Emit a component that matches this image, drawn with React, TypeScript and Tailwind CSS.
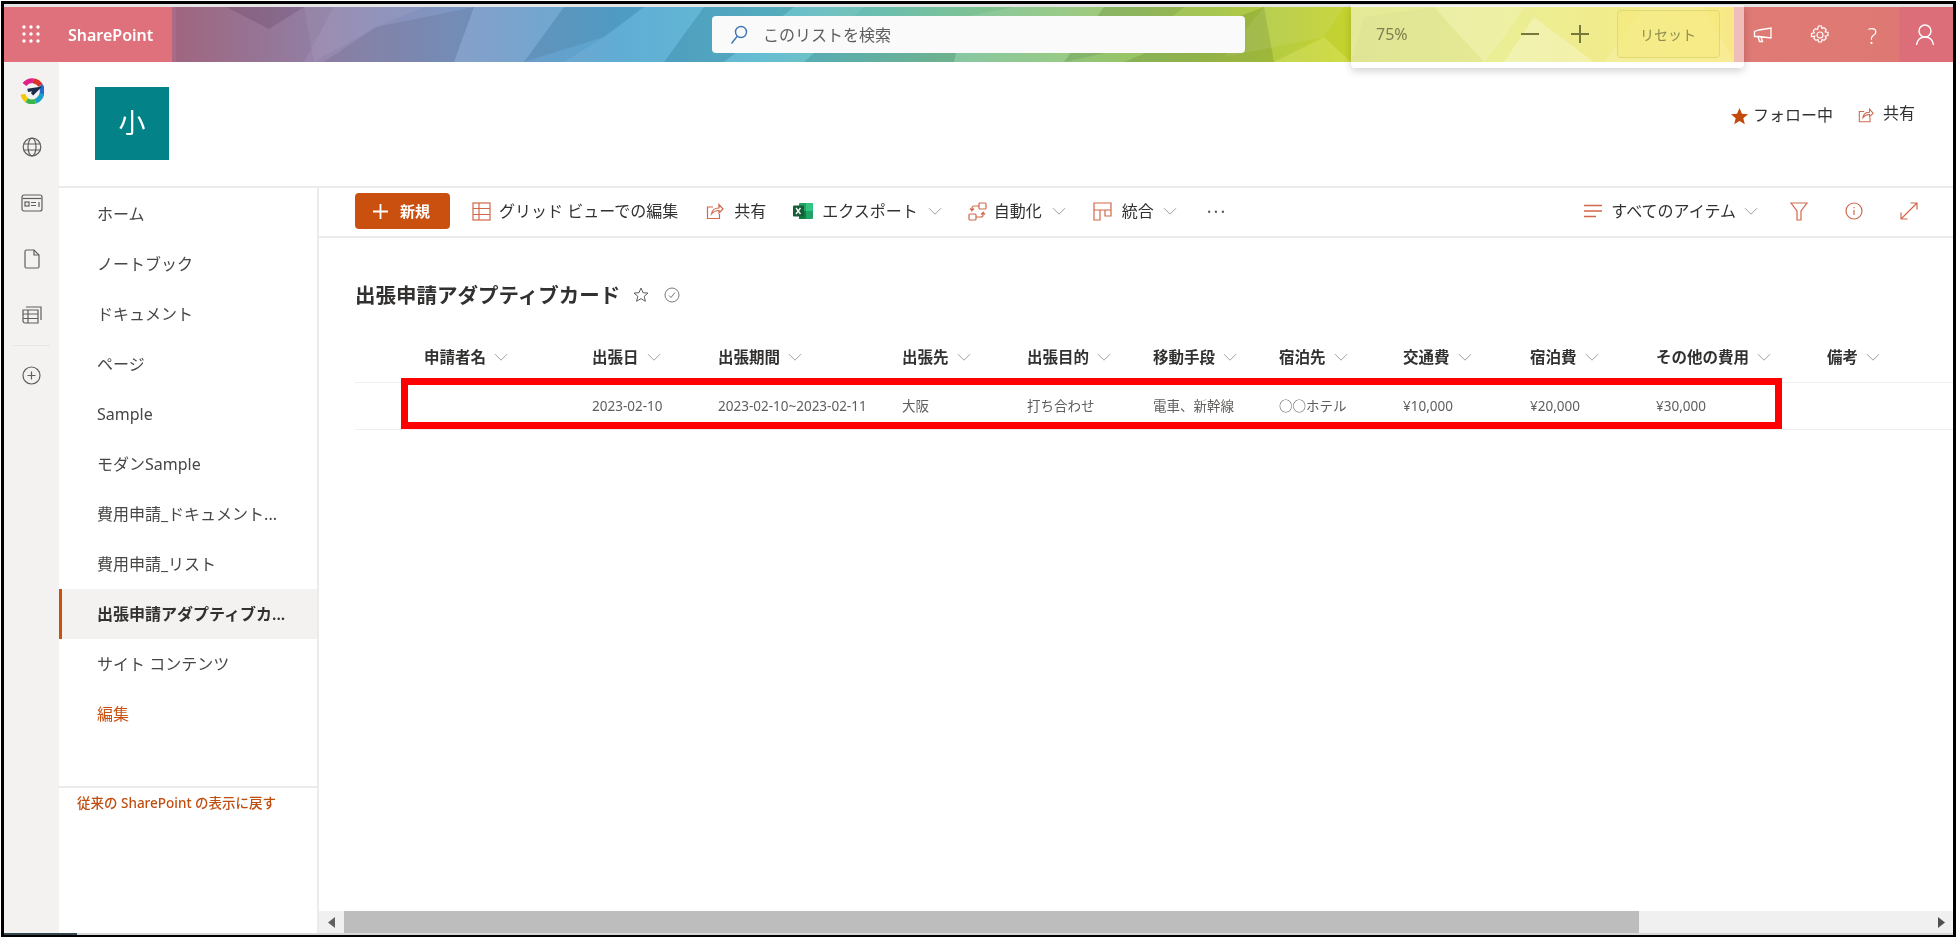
import React from "react";

const FONT = "font-['Noto_Sans','Noto_Sans_CJK_JP',sans-serif]";

const facets: [string, string, number][] = [
  ["172,0 330,0 300,55 172,55", "#000", 0.05],
  ["222,0 300,0 265,22", "#301030", 0.14],
  ["300,0 420,0 372,20 310,55", "#fff", 0.06],
  ["372,20 470,0 450,55 320,55", "#000", 0.07],
  ["450,55 470,0 560,0 520,55", "#fff", 0.08],
  ["520,55 560,0 640,0 600,30", "#000", 0.07],
  ["600,30 640,0 700,0 660,55 560,55", "#fff", 0.07],
  ["660,55 700,0 790,0 720,55", "#000", 0.08],
  ["720,55 790,0 860,0 800,55", "#fff", 0.08],
  ["800,55 840,20 960,10 950,55", "#000", 0.08],
  ["950,55 960,10 1010,0 1100,0 1060,55", "#fff", 0.1],
  ["1060,55 1100,0 1180,0 1130,40", "#000", 0.08],
  ["1120,55 1180,30 1260,0 1270,55", "#2a5010", 0.16],
  ["1260,0 1340,0 1320,30 1220,50", "#fff", 0.08],
  ["1270,55 1320,30 1347,55", "#ffffa0", 0.2],
  ["1347,55 1360,10 1430,0 1480,55", "#000", 0.04],
  ["1430,0 1520,0 1500,30 1480,55", "#fff", 0.15],
  ["1500,55 1530,10 1590,55", "#fff", 0.25],
  ["1600,55 1640,0 1700,0 1730,55", "#fff", 0.12],
];

const Chevron = ({ className = "text-[#a19f9d]", size = 14 }: { className?: string; size?: number }) => (
  <svg width={size} height={size * 0.6} viewBox="0 0 14 8" fill="none" stroke="currentColor" strokeWidth="1" className={className}>
    <path d="M1 1l6 6 6-6" />
  </svg>
);

const GridIcon = () => (
  <svg width="19" height="19" viewBox="0 0 19 19" fill="none" stroke="#d0684a" strokeWidth="1.2">
    <rect x="1" y="1" width="17" height="17" />
    <path d="M1 6.5h17M1 12.5h17M7 1v17" />
  </svg>
);

const ShareIcon = ({ size = 18 }: { size?: number }) => (
  <svg width={size} height={size} viewBox="0 0 18 18" fill="none" stroke="#d0684a" strokeWidth="1.2">
    <path d="M7 5H1.5v11.5h12V12" />
    <path d="M5.5 12c.5-4 3.500-6 7.500-6V2.500L17 7l-4 4V8.500c-3 0-5.500 1-7.500 3.500z" />
  </svg>
);

const ExcelIcon = () => (
  <svg width="20" height="18" viewBox="0 0 20 18">
    <rect x="6" y="1" width="14" height="16" rx="1" fill="#21a366" />
    <rect x="13" y="1" width="7" height="8" fill="#33c481" />
    <rect x="6" y="9" width="7" height="8" fill="#107c41" />
    <rect x="0" y="3.500" width="11" height="11" rx="1" fill="#185c37" />
    <path d="M3 6l4.500 6M7.500 6L3 12" stroke="#fff" strokeWidth="1.300" />
  </svg>
);

const AutoIcon = () => (
  <svg width="19" height="19" viewBox="0 0 19 19" fill="none" stroke="#d0684a" strokeWidth="1.2">
    <rect x="11" y="1" width="7" height="6" rx="1" />
    <rect x="1" y="12" width="7" height="6" rx="1" />
    <path d="M11 4H6a2 2 0 0 0-2 2v2.500l2-2M4 8.500l-2-2M8 15h5a2 2 0 0 0 2-2v-2.500l-2 2M15 10.500l2 2" />
  </svg>
);

const MergeIcon = () => (
  <svg width="19" height="19" viewBox="0 0 19 19" fill="none" stroke="#d0684a" strokeWidth="1.2">
    <path d="M1 1h17v7H1zM1 8v10h6V8M12 8v6h6V8" />
  </svg>
);

const ViewIcon = () => (
  <svg width="18" height="14" viewBox="0 0 18 14" fill="none" stroke="#d0684a" strokeWidth="1.3">
    <path d="M0 1.500h18M0 7h18M0 12.500h12" />
  </svg>
);

const FilterIcon = () => (
  <svg width="18" height="19" viewBox="0 0 18 19" fill="none" stroke="#d0684a" strokeWidth="1.2">
    <path d="M1 1h16l-6 8v9H7V9z" />
  </svg>
);

const InfoIcon = () => (
  <svg width="18" height="18" viewBox="0 0 18 18" fill="none" stroke="#d0684a" strokeWidth="1.2">
    <circle cx="9" cy="9" r="8" />
    <path d="M9 8v5M9 5v1.300" />
  </svg>
);

const ExpandIcon = () => (
  <svg width="18" height="18" viewBox="0 0 18 18" fill="none" stroke="#d0684a" strokeWidth="1.2">
    <path d="M1 17L17 1M10.500 1H17v6.500M1 10.500V17h6.500" />
  </svg>
);

const RailLogo = () => (
  <svg width="24" height="26" viewBox="0 0 22 24" fill="none" strokeWidth="4.500">
    <path d="M4 6a9.500 9.500 0 0 1 8-3.500" stroke="#e0218a" />
    <path d="M12 2.500A9.500 9.500 0 0 1 19 7" stroke="#d9322a" />
    <path d="M19 7a9.500 9.500 0 0 1 1 8" stroke="#1e6fd0" />
    <path d="M20 15a9.500 9.500 0 0 1-6 6.500" stroke="#18a0c8" />
    <path d="M14 21.500A9.500 9.500 0 0 1 6 20.500" stroke="#3bb54a" />
    <path d="M6 20.500A9.500 9.500 0 0 1 2.500 15" stroke="#f2c811" />
    <path d="M7 11.500l9-1.500-5 5" stroke="#1b2a4a" strokeWidth="3" />
  </svg>
);

const RailGlobe = () => (
  <svg width="20" height="20" viewBox="0 0 20 20" fill="none" stroke="#605e5c" strokeWidth="1.2">
    <circle cx="10" cy="10" r="8.800" />
    <ellipse cx="10" cy="10" rx="4" ry="8.800" />
    <path d="M1.500 7h17M1.500 13h17" />
  </svg>
);

const RailNews = () => (
  <svg width="22" height="18" viewBox="0 0 22 18" fill="none" stroke="#605e5c" strokeWidth="1.2">
    <path d="M3 1h16a2 2 0 0 1 2 2v12a2 2 0 0 1-2 2H3a2 2 0 0 1-2-2V3a2 2 0 0 1 2-2z" />
    <path d="M1.500 4.500h19" />
    <rect x="4" y="8" width="4" height="4" />
    <path d="M10 8.500h5M10 11.500h5M18 8v5" />
  </svg>
);

const RailDoc = () => (
  <svg width="16" height="20" viewBox="0 0 16 20" fill="none" stroke="#605e5c" strokeWidth="1.2">
    <path d="M2.500 1H10l5 5v11.500a1.500 1.500 0 0 1-1.500 1.500h-11A1.500 1.500 0 0 1 1 17.500v-15A1.500 1.500 0 0 1 2.500 1z" />
    <path d="M10 1v5h5" />
  </svg>
);

const RailList = () => (
  <svg width="20" height="18" viewBox="0 0 20 18" fill="none" stroke="#605e5c" strokeWidth="1.2">
    <path d="M4 1h15v13M1 4h15v13H3a2 2 0 0 1-2-2z" />
    <path d="M1 8h15M1 12.500h15M6 4v13" />
  </svg>
);

const RailPlus = () => (
  <svg width="19" height="19" viewBox="0 0 19 19" fill="none" stroke="#605e5c" strokeWidth="1.2">
    <circle cx="9.500" cy="9.500" r="8.500" />
    <path d="M9.500 5.500v8M5.500 9.500h8" />
  </svg>
);

const navItems = [
  "ホーム",
  "ノートブック",
  "ドキュメント",
  "ページ",
  "Sample",
  "モダンSample",
  "費用申請_ドキュメント...",
  "費用申請_リスト",
  "出張申請アダプティブカ...",
  "サイト コンテンツ",
  "編集",
];

const columns = [
  { head: "", cell: "" },
  { head: "申請者名", cell: "" },
  { head: "出張日", cell: "2023-02-10" },
  { head: "出張期間", cell: "2023-02-10~2023-02-11" },
  { head: "出張先", cell: "大阪" },
  { head: "出張目的", cell: "打ち合わせ" },
  { head: "移動手段", cell: "電車、新幹線" },
  { head: "宿泊先", cell: "○○ホテル" },
  { head: "交通費", cell: "¥10,000" },
  { head: "宿泊費", cell: "¥20,000" },
  { head: "その他の費用", cell: "¥30,000" },
  { head: "備考", cell: "" },
];

const GRID = "grid grid-cols-[69px_168px_126px_184px_125px_126px_126px_124px_127px_126px_171px_126px]";

export default function App() {
  return (
    <div className={`relative h-[939px] w-[1957px] overflow-hidden bg-white pl-px pt-px blur-[0.5px] ${FONT}`}>
      <div className="relative flex h-[936px] w-[1955px] flex-col border-[3px] border-b-2 border-black">
        {/* strip above the bar */}
        <div className="h-[3px] shrink-0 bg-[#e4e4e4]" />

        {/* suite bar */}
        <header className="relative flex h-[55px] shrink-0 items-stretch bg-[linear-gradient(90deg,#a96a85_168px,#9a84aa_300px,#7d97c4_450px,#54a7d2_620px,#5ab9cf_760px,#6fbfa8_900px,#8cc47c_1050px,#a6c552_1200px,#c6d32e_1347px,#d6dc2a_1500px,#ecd509_1700px,#f0d010_1730px)]">
          <svg className="absolute inset-0 h-full w-full" viewBox="0 0 1949 55" preserveAspectRatio="none">
            {facets.map(([p, f, o], i) => (
              <polygon key={i} points={p} fill={f} fillOpacity={o} />
            ))}
          </svg>
          <div className="relative flex w-[168px] items-center bg-[#df717d]">
            <svg width="18" height="18" viewBox="0 0 18 18" fill="#fff" className="ml-[18px] -mt-[1px]">
              {[2, 9, 16].map((y) =>
                [2, 9, 16].map((x) => <circle key={`${x}-${y}`} cx={x} cy={y} r="1.700" />)
              )}
            </svg>
            <span className="ml-[28px] whitespace-nowrap text-[16px] font-semibold text-white">SharePoint</span>
          </div>
          <div className="relative flex flex-1 items-center">
            <div className="ml-[540px] flex h-[37px] w-[533px] items-center rounded bg-[#fafafa] pl-[18px]">
              <svg width="18" height="20" viewBox="0 0 18 20" fill="none" stroke="#3f72b8" strokeWidth="1.400">
                <circle cx="11" cy="7" r="5.500" />
                <path d="M7 11.500L1.500 18.500" />
              </svg>
              <span className="ml-[15px] text-[16px] text-[#605e5c]">このリストを検索</span>
            </div>
          </div>
          <div className="relative flex w-[219px] items-center bg-[linear-gradient(90deg,#df7a75,#de7873_75%,#dc6e7a_76%)]">
            <div className="ml-[19px] flex w-[182px] items-center justify-between text-white">
              <svg width="19" height="16" viewBox="0 0 19 16" fill="none" stroke="#fff" strokeWidth="1.300">
                <path d="M18 1v10L6 9.500H1.500V4.500L6 3zM5 9.500l1.500 5h3L8 10" />
              </svg>
              <svg width="20" height="20" viewBox="0 0 20 20" fill="none" stroke="#fff" strokeWidth="1.200">
                <circle cx="10" cy="10" r="3" />
                <path d="M8.500 1h3l.5 2.500 2-.9 2.200 2.100-1 2.100 2.800.7v3l-2.800.7 1 2.100-2.200 2.100-2-.9-.5 2.500h-3l-.5-2.500-2 .9-2.200-2.100 1-2.100L1.500 11.500v-3l2.800-.7-1-2.100 2.200-2.100 2 .9z" />
              </svg>
              <span className="text-[22px] font-light leading-none">?</span>
              <svg width="20" height="22" viewBox="0 0 20 22" fill="none" stroke="#fff" strokeWidth="1.400">
                <circle cx="10" cy="7" r="6" />
                <path d="M1.500 21c.8-5 3.500-8 8.500-8s7.700 3 8.500 8" />
              </svg>
            </div>
          </div>
        </header>

        {/* zoom popup, floats over the suite bar */}
        <div className="absolute left-[1347px] top-[1px] z-10 flex h-[63px] w-[393px] items-center rounded-b bg-white/50 pb-[5px] shadow-[0_3px_8px_rgba(0,0,0,0.18)]">
          <span className="ml-[25px] text-[16px] text-[#7d7f50]">75%</span>
          <svg width="18" height="18" viewBox="0 0 18 18" stroke="#77783a" strokeWidth="2" className="ml-[113px]">
            <path d="M0 9h18" />
          </svg>
          <svg width="18" height="18" viewBox="0 0 18 18" stroke="#77783a" strokeWidth="2" className="ml-[32px]">
            <path d="M0 9h18M9 0v18" />
          </svg>
          <div className="ml-[28px] flex h-[48px] w-[103px] items-center justify-center rounded border border-[#e2d974] bg-[#f6e97a]/50 text-[14px] text-[#8c8c50]">
            リセット
          </div>
        </div>

        {/* body */}
        <div className="flex min-h-0 flex-1">
          {/* app rail */}
          <aside className="flex w-[55px] shrink-0 flex-col items-center bg-[#f3f2f1] pt-px">
            <div className="flex h-14 items-center justify-center"><RailLogo /></div>
            <div className="flex h-14 items-center justify-center"><RailGlobe /></div>
            <div className="flex h-14 items-center justify-center"><RailNews /></div>
            <div className="flex h-14 items-center justify-center"><RailDoc /></div>
            <div className="flex h-14 items-center justify-center"><RailList /></div>
            <div className="mt-[2px] h-px w-[37px] bg-[#e8e6e4]" />
            <div className="flex h-[58px] items-center justify-center"><RailPlus /></div>
          </aside>

          <div className="flex min-w-0 flex-1 flex-col">
            {/* site header */}
            <div className="flex h-[126px] shrink-0 justify-between border-b-2 border-[#edebe9]">
              <div className="ml-[36px] mt-[25px] flex h-[73px] w-[74px] items-center justify-center bg-[#038387] text-[27px] text-white">
                小
              </div>
              <div className="mr-[38px] mt-[40px] flex items-start text-[16px] leading-[24px] text-[#323130]">
                <svg width="17" height="17" viewBox="0 0 16 16" fill="#c24a0c" className="mt-[6px]">
                  <path d="M8 0l2.300 5.500 5.700.4-4.400 3.700 1.400 5.800L8 12.300l-5 3.100 1.400-5.800L0 5.900l5.700-.4z" />
                </svg>
                <span className="ml-[5px] mt-[1px]">フォロー中</span>
                <span className="ml-[25px] mt-[5px]"><ShareIcon size={16} /></span>
                <span className="ml-[9px] -mt-[1px]">共有</span>
              </div>
            </div>

            <div className="flex min-h-0 flex-1">
              {/* left nav */}
              <nav className="flex w-[260px] shrink-0 flex-col border-r-2 border-[#edebe9] pt-px text-[16px] text-[#484644]">
                {navItems.map((item) => {
                  const active = item.startsWith("出張申請");
                  const edit = item === "編集";
                  return (
                    <div
                      key={item}
                      className={
                        active
                          ? "flex h-[50px] items-center whitespace-nowrap border-l-[3px] border-[#ca5010] bg-[#f3f2f1] pl-[35px] font-semibold text-[#323130]"
                          : edit
                          ? "flex h-[50px] items-center whitespace-nowrap pl-[38px] text-[#ca5010]"
                          : "flex h-[50px] items-center whitespace-nowrap pl-[38px]"
                      }
                    >
                      {item}
                    </div>
                  );
                })}
                <div className="mt-[47px] border-t-2 border-[#edebe9] pl-[18px] pt-[5px] text-[13.5px] font-medium leading-5 text-[#bf4d10]">
                  従来の SharePoint の表示に戻す
                </div>
              </nav>

              {/* main */}
              <main className="flex min-w-0 flex-1 flex-col">
                <div className="flex h-[50px] shrink-0 items-center justify-between border-b-2 border-[#edebe9] pb-[2px] pl-[36px] pr-[35px] text-[16px] text-[#323130]">
                  <div className="flex items-center">
                    <div className="flex h-[36px] w-[95px] items-center rounded-sm bg-[#ca5010] pl-[18px] text-[15px] font-bold text-white">
                      <svg width="15" height="15" viewBox="0 0 15 15" stroke="#fff" strokeWidth="1.800">
                        <path d="M0 7.500h15M7.500 0v15" />
                      </svg>
                      <span className="ml-[12px]">新規</span>
                    </div>
                    <span className="ml-[22px]"><GridIcon /></span>
                    <span className="ml-[8px] whitespace-nowrap">グリッド ビューでの編集</span>
                    <span className="ml-[28px]"><ShareIcon /></span>
                    <span className="ml-[10px]">共有</span>
                    <span className="ml-[27px]"><ExcelIcon /></span>
                    <span className="ml-[9px]">エクスポート</span>
                    <span className="ml-[10px]"><Chevron /></span>
                    <span className="ml-[26px]"><AutoIcon /></span>
                    <span className="ml-[7px]">自動化</span>
                    <span className="ml-[10px]"><Chevron /></span>
                    <span className="ml-[27px]"><MergeIcon /></span>
                    <span className="ml-[10px]">統合</span>
                    <span className="ml-[9px]"><Chevron /></span>
                    <span className="ml-[30px] text-[18px] leading-none tracking-[2px] text-[#605e5c]">···</span>
                  </div>
                  <div className="flex items-center">
                    <ViewIcon />
                    <span className="ml-[9px]">すべてのアイテム</span>
                    <span className="ml-[8px]"><Chevron /></span>
                    <span className="ml-[32px]"><FilterIcon /></span>
                    <span className="ml-[37px]"><InfoIcon /></span>
                    <span className="ml-[37px]"><ExpandIcon /></span>
                  </div>
                </div>

                <div className="ml-[36px] mt-[43px] flex h-[28px] shrink-0 items-center">
                  <h1 className="text-[20.5px] font-semibold text-[#323130]">出張申請アダプティブカード</h1>
                  <svg width="16" height="16" viewBox="0 0 16 16" fill="none" stroke="#605e5c" strokeWidth="1" className="ml-[13px]">
                    <path d="M8 1l2 4.700 5 .4-3.800 3.200 1.200 5L8 11.600l-4.400 2.700 1.200-5L1 6.100l5-.4z" />
                  </svg>
                  <svg width="16" height="16" viewBox="0 0 16 16" fill="none" stroke="#7a7876" strokeWidth="1" className="ml-[15px]">
                    <circle cx="8" cy="8" r="7" />
                    <path d="M5 8.500l2 2 4-5" />
                  </svg>
                </div>

                <div className={`ml-[36px] mt-[24px] h-[49px] shrink-0 items-center ${GRID}`}>
                  {columns.map((c, i) => (
                    <div key={i} className="flex items-center whitespace-nowrap text-[15.5px] font-semibold text-[#323130]">
                      {c.head}
                      {c.head && <span className="ml-[8px]"><Chevron /></span>}
                    </div>
                  ))}
                </div>
                <div className={`ml-[36px] h-[48px] shrink-0 items-center border-y border-[#f0eeec] ${GRID}`}>
                  {columns.map((c, i) => (
                    <div key={i} className="whitespace-nowrap text-[13.5px] text-[#605e5c]">
                      {c.cell}
                    </div>
                  ))}
                </div>

                {/* horizontal scrollbar */}
                <div className="mt-auto flex h-[22px] shrink-0 bg-[#f0f0f0]">
                  <div className="flex w-[25px] items-center justify-center">
                    <svg width="7" height="11" viewBox="0 0 7 11" fill="#606060"><path d="M7 0v11L0 5.500z" /></svg>
                  </div>
                  <div className="h-full w-[1295px] bg-[#bdbdbd]" />
                  <div className="flex flex-1 items-center justify-end pr-[8px]">
                    <svg width="7" height="11" viewBox="0 0 7 11" fill="#505050"><path d="M0 0v11l7-5.500z" /></svg>
                  </div>
                </div>
              </main>
            </div>
          </div>
        </div>

        {/* bottom hairline */}
        <div className="flex h-[2px] shrink-0 bg-[#d8d8d8]">
          <div className="w-[73px] bg-[#37474f]" />
        </div>
      </div>

      {/* red annotation drawn over the list row */}
      <div className="absolute left-[401px] top-[378px] h-[51px] w-[1381px] border-[7px] border-[#ff0000]" />
    </div>
  );
}
